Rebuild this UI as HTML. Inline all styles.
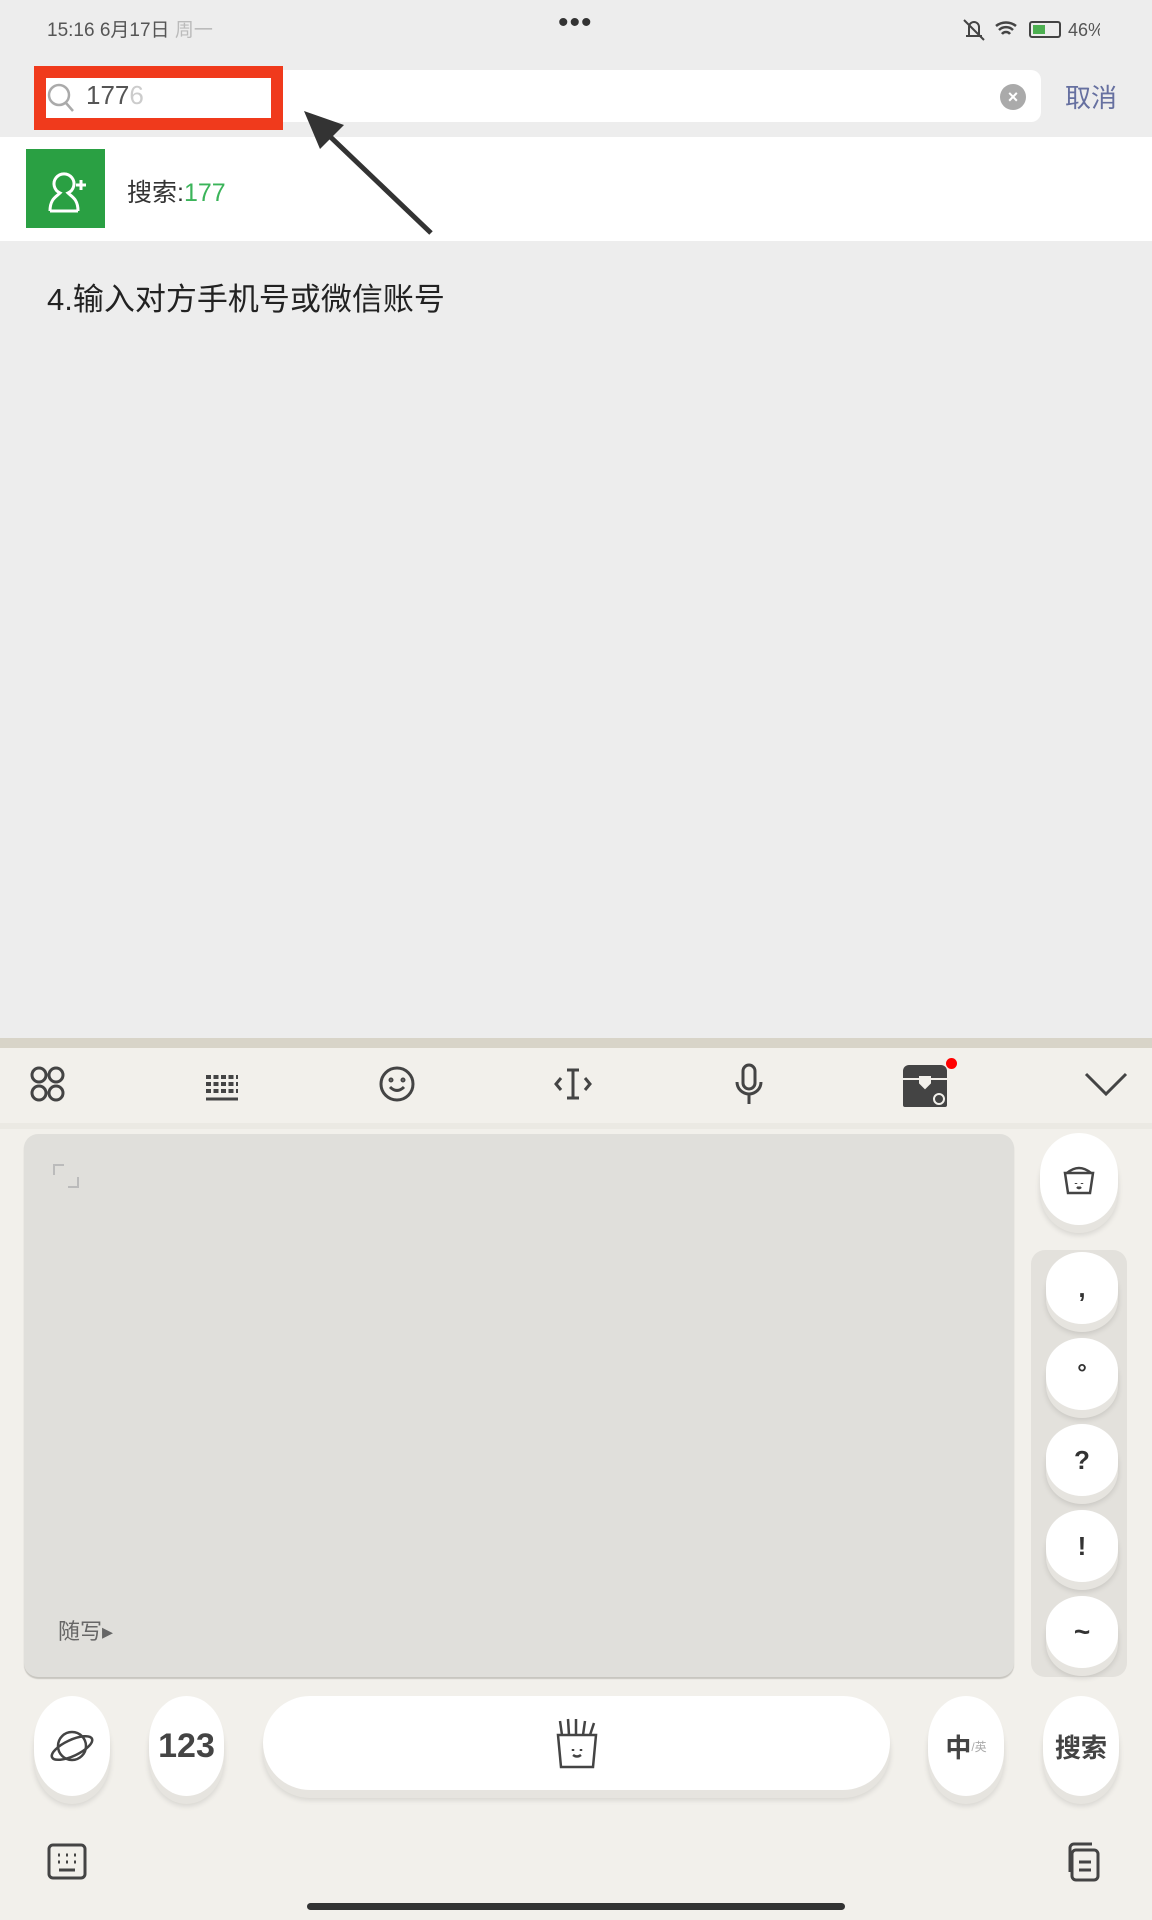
<!DOCTYPE html>
<html><head><meta charset="utf-8"><style>
*{margin:0;padding:0;box-sizing:border-box}
body{width:1152px;height:1920px;background:#ededed;position:relative;overflow:hidden;font-family:"Liberation Sans","Noto Sans CJK SC",sans-serif}
.a{position:absolute}
.key{position:absolute;background:#fff;border-radius:50%/45%;box-shadow:0 8px 0 #e6e4df,0 10px 6px rgba(0,0,0,.12);display:flex;align-items:center;justify-content:center;color:#333;font-weight:bold}
</style></head><body>
<div class="a" style="left:47px;top:15px;font-size:19px;color:#555">15:16 6月17日 <span style="color:#bbb">周一</span></div>
<div class="a" style="left:558px;top:6px;font-size:30px;color:#333;letter-spacing:1px">•••</div>
<svg class="a" style="left:960px;top:16px" width="140" height="26"><path d="M6 20h16M9 20V11a5 5 0 0110 0v9M4 4l20 20" stroke="#444" stroke-width="2" fill="none"/><path d="M36 10a16 16 0 0120 0M39 14a10 10 0 0114 0M42 18a5 5 0 018 0" stroke="#444" stroke-width="2.5" fill="none"/><rect x="70" y="6" width="30" height="15" rx="2" stroke="#444" stroke-width="2" fill="none"/><rect x="73" y="9" width="12" height="9" fill="#4caf50"/><text x="108" y="20" font-size="18" fill="#555">46%</text></svg>
<div class="a" style="left:43px;top:70px;width:998px;height:52px;background:#fff;border-radius:10px"></div>
<div class="a" style="left:34px;top:66px;width:249px;height:64px;border:12px solid #f03a1c;background:#fff"></div>
<svg class="a" style="left:46px;top:82px" width="30" height="32"><circle cx="13" cy="13" r="10" stroke="#aaa" stroke-width="2.5" fill="none"/><path d="M20 21l7 8" stroke="#aaa" stroke-width="2.5"/></svg>
<div class="a" style="left:86px;top:80px;font-size:26px;color:#555">177<span style="color:#ccc">6</span></div>
<div class="a" style="left:1000px;top:84px;width:26px;height:26px;border-radius:50%;background:#aaa;color:#fff;font-size:18px;text-align:center;line-height:26px;font-weight:bold">×</div>
<div class="a" style="left:1065px;top:78px;font-size:26px;color:#6670a0">取消</div>
<div class="a" style="left:0;top:137px;width:1152px;height:104px;background:#fff"></div>
<div class="a" style="left:26px;top:149px;width:79px;height:79px;background:#2aa043"></div>
<svg class="a" style="left:26px;top:149px" width="79" height="79"><path d="M24 62h28M24 62c0-12 6-14 10-18a10 10 0 118 0c4 4 10 6 10 18" stroke="#fff" stroke-width="3" fill="none"/><path d="M50 36h10M55 31v10" stroke="#fff" stroke-width="3"/></svg>
<div class="a" style="left:127px;top:173px;font-size:25px;color:#333">搜索:<span style="color:#3bb45a">177</span></div>
<svg class="a" style="left:290px;top:105px" width="160" height="140"><path d="M141 128L30 22" stroke="#333" stroke-width="5"/><path d="M14 6l40 14-24 24z" fill="#333"/></svg>
<div class="a" style="left:47px;top:274px;font-size:31px;color:#222">4.输入对方手机号或微信账号</div>
<div class="a" style="left:0;top:1038px;width:1152px;height:882px;background:#f2f0eb"></div>
<div class="a" style="left:0;top:1038px;width:1152px;height:10px;background:#d8d4c8"></div>
<div class="a" style="left:0;top:1123px;width:1152px;height:6px;background:#ebe9e3"></div>
<svg class="a" style="left:0;top:1060px" width="1152" height="50" fill="none" stroke="#444" stroke-width="3">
<circle cx="39" cy="15" r="7"/><circle cx="56" cy="15" r="7"/><circle cx="39" cy="33" r="7"/><circle cx="56" cy="33" r="7"/>
<path d="M206 17h32M206 24h32M206 31h32" stroke-dasharray="5 2.5" stroke-width="4"/><path d="M206 39h32"/>
<circle cx="397" cy="24" r="16"/><path d="M390 27q7 7 14 0"/><circle cx="391" cy="20" r="1" /><circle cx="403" cy="20" r="1"/>
<path d="M573 10v28M567 10h12M567 38h12M561 18l-5 6 5 6M585 18l5 6-5 6"/>
<rect x="743" y="5" width="12" height="24" rx="6"/><path d="M737 22a12 12 0 0024 0M749 34v10"/>
<path d="M1086 14l20 20 20-20"/></svg>
<div class="a" style="left:903px;top:1065px;width:44px;height:42px;background:#444;border-radius:6px 6px 2px 2px"></div>
<svg class="a" style="left:903px;top:1065px" width="44" height="42" fill="none" stroke="#f2f0eb" stroke-width="2"><path d="M0 14h44"/><path d="M17 12h10v6l-5 5-5-5z" fill="#f2f0eb"/><circle cx="36" cy="34" r="5"/></svg>
<div class="a" style="left:946px;top:1058px;width:11px;height:11px;background:#f00;border-radius:50%"></div>
<div class="a" style="left:24px;top:1134px;width:990px;height:543px;background:#e0dfdb;border-radius:14px;box-shadow:0 2px 1px #c8c6c0"></div>
<svg class="a" style="left:52px;top:1163px" width="30" height="30" fill="none" stroke="#bbb" stroke-width="2"><path d="M2 12V2h10M26 14v10H16"/></svg>
<div class="a" style="left:58px;top:1614px;font-size:22px;color:#666">随写▸</div>
<div class="key" style="left:1040px;top:1133px;width:78px;height:92px"><svg width="40" height="40" fill="none" stroke="#444" stroke-width="2.5"><path d="M6 14h28l-3 20H9z"/><path d="M8 14q12-10 24 0"/><path d="M17 24v1M23 24v1M18 28q2 2 4 0"/></svg></div>
<div class="a" style="left:1031px;top:1250px;width:96px;height:427px;background:#e3e1dc;border-radius:14px"></div>
<div class="key" style="left:1046px;top:1252px;width:72px;height:72px;font-size:26px">,</div>
<div class="key" style="left:1046px;top:1338px;width:72px;height:72px;font-size:24px">°</div>
<div class="key" style="left:1046px;top:1424px;width:72px;height:72px;font-size:26px">?</div>
<div class="key" style="left:1046px;top:1510px;width:72px;height:72px;font-size:26px">!</div>
<div class="key" style="left:1046px;top:1596px;width:72px;height:72px;font-size:28px">~</div>
<div class="key" style="left:34px;top:1696px;width:76px;height:100px"><svg width="50" height="50" fill="none" stroke="#444" stroke-width="2.5"><circle cx="25" cy="25" r="14"/><ellipse cx="25" cy="27" rx="22" ry="8" transform="rotate(-25 25 27)"/></svg></div>
<div class="key" style="left:149px;top:1696px;width:75px;height:100px;font-size:34px;color:#444">123</div>
<div class="key" style="left:263px;top:1696px;width:627px;height:94px;border-radius:47px"><svg width="50" height="56" fill="none" stroke="#444" stroke-width="2.5"><path d="M6 20h38l-3 32H9z"/><path d="M10 20l-2-14M17 20l-1-16M24 20V4M31 20l2-14M38 20l4-12"/><path d="M21 34v2M29 34v2M21 40q4 3 8 0"/></svg></div>
<div class="key" style="left:928px;top:1696px;width:76px;height:100px;font-size:26px;color:#444">中<span style="font-size:12px;color:#aaa;font-weight:normal">/英</span></div>
<div class="key" style="left:1043px;top:1696px;width:76px;height:100px;font-size:26px;color:#444">搜索</div>
<svg class="a" style="left:46px;top:1842px" width="44" height="40" fill="none" stroke="#444" stroke-width="3"><rect x="3" y="3" width="36" height="33" rx="4"/><path d="M12 13h2M20 13h2M28 13h2M12 20h2M20 20h2M28 20h2M13 28h16"/></svg>
<svg class="a" style="left:1062px;top:1840px" width="44" height="44" fill="none" stroke="#444" stroke-width="3"><path d="M8 32V8a4 4 0 014-4h18"/><rect x="10" y="10" width="26" height="30" rx="4"/><path d="M17 22h12M17 30h12"/></svg>
<div class="a" style="left:307px;top:1903px;width:538px;height:7px;background:#333;border-radius:4px"></div>
</body></html>
